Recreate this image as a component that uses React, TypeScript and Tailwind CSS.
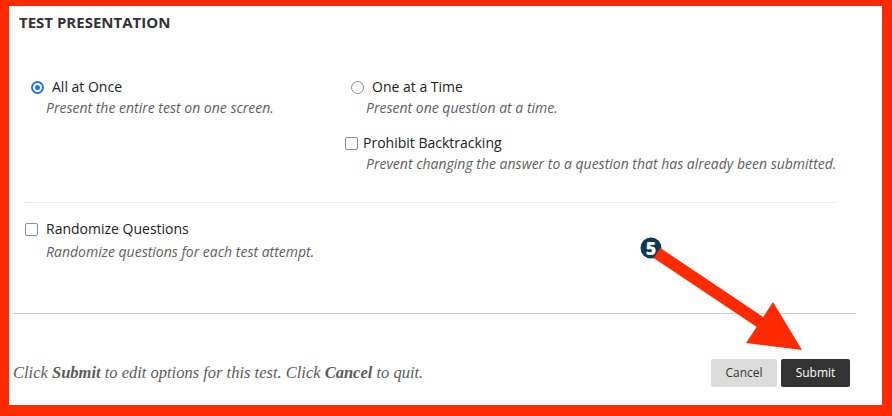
import React from 'react';

const sans = { fontFamily: '"Open Sans", "Noto Sans", sans-serif' };

const Radio = ({ checked }: { checked?: boolean }) =>
  checked ? (
    <span className="flex h-[13px] w-[13px] shrink-0 items-center justify-center rounded-full border-2 border-[#1f74ea]">
      <span className="h-[5px] w-[5px] rounded-full bg-[#1f74ea]" />
    </span>
  ) : (
    <span className="h-[13px] w-[13px] shrink-0 rounded-full border-[1.5px] border-[#8e8c9a]" />
  );

const Checkbox = () => (
  <span className="h-[13px] w-[13px] shrink-0 rounded-[2px] border-[1.5px] border-[#8e8c9a]" />
);

const Desc = ({ children, className = '' }: { children: React.ReactNode; className?: string }) => (
  <p className={`text-[14px] italic leading-[20px] text-[#606060] ${className}`}>{children}</p>
);

const App = () => {
  return (
    <div
      className="relative flex h-[416px] w-[892px] flex-col border-b-[11px] border-l-[9px] border-r-[10px] border-t-[6px] border-[#ff2a00] bg-white text-[#222]"
      style={sans}
    >
      <h2 className="pl-[10px] pt-[6px] text-[15px] font-bold leading-[20px] text-[#333]">TEST PRESENTATION</h2>

      <div className="mt-[45px] w-[829px] pl-[16px]">
        <div className="flex">
          <div className="w-[320px] pl-[6px]">
            <label className="flex items-center gap-[8px] text-[14px] leading-[20px]">
              <Radio checked />
              All at Once
            </label>
            <Desc className="mt-[1px] pl-[15px]">Present the entire test on one screen.</Desc>
          </div>
          <div>
            <label className="flex items-center gap-[8px] pl-[6px] text-[14px] leading-[20px]">
              <Radio />
              One at a Time
            </label>
            <Desc className="mt-[1px] pl-[21px]">Present one question at a time.</Desc>
            <label className="mt-[15px] flex items-center gap-[5px] text-[14px] leading-[20px]">
              <Checkbox />
              Prohibit Backtracking
            </label>
            <Desc className="mt-[1px] pl-[21px]">
              Prevent changing the answer to a question that has already been submitted.
            </Desc>
          </div>
        </div>

        <div className="mt-[28px] h-px bg-[#e9e9e9]" />

        <label className="mt-[16px] flex items-center gap-[8px] text-[14px] leading-[20px]">
          <Checkbox />
          Randomize Questions
        </label>
        <Desc className="mt-[3px] pl-[21px]">Randomize questions for each test attempt.</Desc>
      </div>

      <div className="ml-[4px] mr-[26px] mt-[51px] h-px bg-[#cfcfcf]" />

      <div className="mt-[45px] flex items-center justify-between pl-[4px] pr-[32px]">
        <p
          className="text-[16.5px] italic leading-[20px] text-[#5c5c5c]"
          style={{ fontFamily: '"Liberation Serif", serif' }}
        >
          Click <b>Submit</b> to edit options for this test. Click <b>Cancel</b> to quit.
        </p>
        <div className="flex gap-[4px]">
          <button className="h-[28px] w-[66px] rounded-[2px] bg-[#dcdcdc] text-[12px] text-[#333]">Cancel</button>
          <button className="h-[28px] w-[69px] rounded-[2px] bg-[#333333] text-[12px] text-white">Submit</button>
        </div>
      </div>

      <svg className="pointer-events-none absolute left-[-9px] top-[-6px]" width="892" height="416" viewBox="0 0 892 416">
        <circle cx="651" cy="248" r="10.5" fill="#0d3a4f" />
        <text
          x="651"
          y="254.5"
          textAnchor="middle"
          fontSize="18"
          fontWeight="800"
          fill="#fff"
          fontFamily='"Open Sans", sans-serif'
        >
          5
        </text>
        <line x1="657" y1="253" x2="772" y2="330" stroke="#ff2a00" strokeWidth="12" />
        <polygon points="773,302 802,350 746,343" fill="#ff2a00" />
      </svg>
    </div>
  );
};

export default App;
